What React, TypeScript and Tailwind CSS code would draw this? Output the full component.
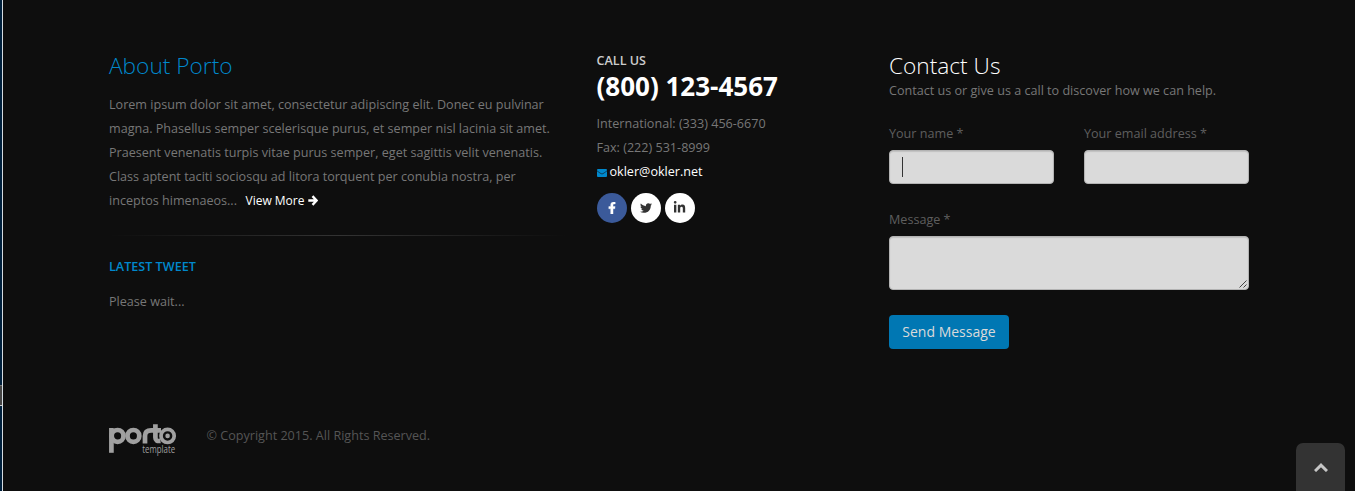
import type { ReactNode } from 'react';
import { FaFacebookF, FaTwitter, FaLinkedinIn } from 'react-icons/fa';

function Social({ className, children }: { className: string; children: ReactNode }) {
  return (
    <a className={`flex h-[30px] w-[30px] items-center justify-center rounded-full ${className}`}>{children}</a>
  );
}

function Field({ label, cursor }: { label: string; cursor?: boolean }) {
  return (
    <div className="flex-1">
      <div className="h-[28px] leading-[24px] text-[#5e5e5e]">{label}</div>
      <div className="flex h-[34px] items-center rounded-[4px] border border-[#b3b3b3] bg-[#dadada] px-3 shadow-[inset_0_1px_1px_rgba(0,0,0,0.12)]">
        {cursor && <span className="h-5 w-px bg-[#333]" />}
      </div>
    </div>
  );
}

function Logo() {
  return (
    <svg width="68" height="38" viewBox="0 0 68 38" fill="none" stroke="#a0a0a0" strokeWidth="4.7">
      <path d="M2.4 5V29.8" />
      <circle cx="8.6" cy="12.9" r="5.9" />
      <circle cx="24.4" cy="12.9" r="5.9" />
      <path d="M36 20.4V13C36 9.2 38.2 7.4 42.2 7.4H52" />
      <path d="M46.4 1.2V14.5C46.4 17.5 48 18.3 51.5 17.9" />
      <circle cx="58.6" cy="12.9" r="6.6" strokeWidth="3.7" />
      <circle cx="58.6" cy="12.9" r="2.3" fill="#a0a0a0" stroke="none" />
      <g transform="translate(33.3 29.6) scale(0.82 1)">
        <text fontSize="10" fill="#a0a0a0" stroke="none" fontFamily="Open Sans, sans-serif" textLength="40" lengthAdjust="spacingAndGlyphs">template</text>
      </g>
    </svg>
  );
}

export default function App() {
  return (
    <div className="flex h-[491px] w-[1356px] overflow-hidden bg-[#0e0e0e] font-['Open_Sans',sans-serif] text-[12.6px] leading-[24px] text-[#777]">
      <div className="flex w-[3px] shrink-0 flex-col border-r border-[#d5dce2] bg-[#00203c]">
        <div className="mt-[385px] h-[21px] border-y border-t-[#777] border-b-[#ccc] bg-[#444]" />
      </div>
      <div className="relative flex flex-1 flex-col pl-[106px]">
        <div className="grid h-[423px] w-[1140px] shrink-0 grid-cols-[457.5px_262.5px_360px] gap-x-[30px] pt-[52px]">
          <section>
            <h4 className="text-[22.68px] leading-[27px] font-light text-[#0088cc]">About Porto</h4>
            <p className="mt-[14px] whitespace-nowrap">
              Lorem ipsum dolor sit amet, consectetur adipiscing elit. Donec eu pulvinar<br />
              magna. Phasellus semper scelerisque purus, et semper nisl lacinia sit amet.<br />
              Praesent venenatis turpis vitae purus semper, eget sagittis velit venenatis.<br />
              Class aptent taciti sociosqu ad litora torquent per conubia nostra, per<br />
              inceptos himenaeos...
              <a className="ml-[8.5px] text-[12px] text-white">
                View More{' '}
                <svg className="inline align-[-1px]" width="10.5" height="11" viewBox="0 0 11 11" fill="none" stroke="currentColor" strokeWidth="2.5">
                  <path d="M0.3 5.5H9M4.7 0.9L9.1 5.5L4.7 10.1" />
                </svg>
              </a>
            </p>
            <div className="mt-[22px] h-px bg-linear-to-r from-transparent via-[#333] to-transparent" />
            <h5 className="mt-[22px] leading-[18px] font-semibold text-[#0088cc]">LATEST TWEET</h5>
            <p className="mt-[14px]">Please wait...</p>
          </section>
          <section>
            <h5 className="leading-[18px] font-semibold text-[#ccc]">CALL US</h5>
            <p className="text-[26px] leading-[32px] font-bold text-white">(800) 123-4567</p>
            <p className="mt-[10px]">International: (333) 456-6670</p>
            <p>Fax: (222) 531-8999</p>
            <p className="flex items-center text-white">
              <svg className="mt-[2px] mr-[3px]" width="10" height="8" viewBox="0 0 10 8">
                <path d="M1 0H9Q10 0 10 0.8V7Q10 8 9 8H1Q0 8 0 7V0.8Q0 0 1 0Z" fill="#0088cc" />
                <path d="M0 1.8C2 3.3 4 4.9 5 4.9S8 3.3 10 1.8" fill="none" stroke="#0e2c3d" strokeWidth="0.8" />
              </svg>
              okler@okler.net
            </p>
            <div className="mt-[9px] flex gap-1">
              <Social className="bg-[#3b5a9a] pb-px text-white"><FaFacebookF size={12} stroke="currentColor" strokeWidth={16} /></Social>
              <Social className="bg-white pb-px text-[#333]"><FaTwitter size={12} /></Social>
              <Social className="bg-white pb-px text-[#333]"><FaLinkedinIn size={13} /></Social>
            </div>
          </section>
          <section>
            <h4 className="text-[22.68px] leading-[27px] font-light text-white">Contact Us</h4>
            <p>Contact us or give us a call to discover how we can help.</p>
            <div className="mt-[19px] flex gap-[30px]">
              <Field label="Your name *" cursor />
              <Field label="Your email address *" />
            </div>
            <div className="mt-[24px] h-[28px] text-[#5e5e5e]">Message *</div>
            <div className="flex h-[54px] items-end justify-end rounded-[4px] border border-[#b3b3b3] bg-[#dadada] pr-px pb-px shadow-[inset_0_1px_1px_rgba(0,0,0,0.12)]">
              <svg width="8" height="8" stroke="#444" strokeWidth="1"><path d="M0.5 7.5L7.5 0.5M4.5 7.5L7.5 4.5" /></svg>
            </div>
            <button className="mt-[25px] h-[34px] w-[120px] rounded-[4px] bg-[#0077b3] text-[14px] text-[#dadada]">Send Message</button>
          </section>
        </div>
        <div className="flex">
          <Logo />
          <p className="mt-px ml-[29.5px] text-[#555]">© Copyright 2015. All Rights Reserved.</p>
        </div>
        <a className="absolute right-[10px] bottom-0 flex h-12 w-[49px] items-center justify-center rounded-t-[7px] bg-[#333]">
          <svg width="14" height="10" fill="none" stroke="#c6c6c6" strokeWidth="3"><path d="M1 9L7 3.2L13 9" /></svg>
        </a>
      </div>
      <div className="w-px shrink-0 bg-white" />
    </div>
  );
}
